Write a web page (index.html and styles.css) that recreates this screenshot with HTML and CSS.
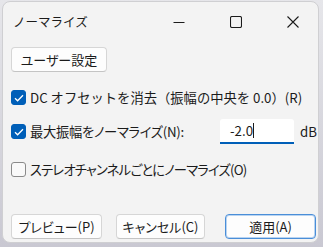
FILE: index.html
```html
<!DOCTYPE html>
<html lang="ja">
<head>
<meta charset="utf-8">
<link rel="stylesheet" href="styles.css">
</head>
<body>
<div class="win">
  <div class="titlebar">
    <span class="title">ノーマライズ</span>
    <div class="controls">
      <span class="ctl"><svg width="12" height="12" viewBox="0 0 12 12"><path d="M0.5 6.5h11" stroke="#1b1b1b" stroke-width="1.1"/></svg></span>
      <span class="ctl"><svg width="12" height="12" viewBox="0 0 12 12"><rect x="0.5" y="0.5" width="11" height="11" rx="1.5" fill="none" stroke="#1b1b1b" stroke-width="1.1"/></svg></span>
      <span class="ctl"><svg width="12" height="12" viewBox="0 0 12 12"><path d="M0.5 0.5l11 11M11.5 0.5l-11 11" stroke="#1b1b1b" stroke-width="1.1"/></svg></span>
    </div>
  </div>
  <div class="body">
    <button class="btn user">ユーザー設定</button>
    <label class="row r1"><span class="cb on"><svg width="10" height="8" viewBox="0 0 10 8"><path d="M1 4.2l2.6 2.6L9 1.2" fill="none" stroke="#fff" stroke-width="1.3"/></svg></span><span class="lbl">DC オフセットを消去（振幅の中央を 0.0）(R)</span></label>
    <div class="row r2"><span class="cb on"><svg width="10" height="8" viewBox="0 0 10 8"><path d="M1 4.2l2.6 2.6L9 1.2" fill="none" stroke="#fff" stroke-width="1.3"/></svg></span><span class="lbl lbl2">最大振幅をノーマライズ(N):</span><span class="input">-2.0<span class="caret"></span></span><span class="db">dB</span></div>
    <label class="row r3"><span class="cb"></span><span class="lbl lbl3">ステレオチャンネルごとにノーマライズ(O)</span></label>
    <div class="buttons">
      <button class="btn b1">プレビュー(P)</button>
      <button class="btn b2">キャンセル(C)</button>
      <button class="btn b3 def">適用(A)</button>
    </div>
  </div>
</div>
</body>
</html>
```
FILE: styles.css
```css
html, body { margin: 0; padding: 0; }
body {
  width: 323px; height: 247px; overflow: hidden;
  background: linear-gradient(180deg, #e6e6ea 0%, #c9c8d2 100%);
  font-family: "Noto Sans CJK JP", "Noto Sans", sans-serif;
  color: #1b1b1b;
}
.win {
  box-sizing: border-box;
  margin: 1px 0 0 2px;
  width: 317px; height: 242px;
  background: #f3f3f3;
  border: 1px solid #cfcfd2;
  border-radius: 8px;
  overflow: hidden;
}
.titlebar { height: 39px; display: flex; align-items: center; }
.title { font-size: 12.5px; margin-left: 10px; margin-top: -1px; }
.controls { margin-left: auto; display: flex; gap: 27px; margin-right: 10px; }
.ctl { width: 30px; height: 14px; display: flex; align-items: center; justify-content: center; }
.body { padding-left: 8px; }
.btn {
  box-sizing: border-box;
  font-family: inherit; font-size: 13px; color: #1b1b1b;
  font-feature-settings: "palt" 1;
  background: #fdfdfd;
  border: 1px solid #d6d6d6; border-bottom-color: #c4c4c4;
  border-radius: 4px;
  padding: 0; line-height: 1;
  display: flex; align-items: center; justify-content: center;
}
.user { width: 96px; height: 25px; margin-top: 6px; }
.row { display: flex; align-items: center; font-size: 13.3px; height: 25px; }
.r1 { margin-top: 13px; }
.r2 { margin-top: 9px; }
.r3 { margin-top: 13px; }
.cb {
  box-sizing: border-box;
  width: 15px; height: 15px; border-radius: 3px;
  border: 1px solid #8a8a8a; background: #f9f9f9;
  display: flex; align-items: center; justify-content: center;
  flex: none;
}
.cb.on { background: #005fb8; border-color: #005fb8; }
.lbl { margin-left: 4px; white-space: nowrap; }
.lbl2 { font-feature-settings: "palt" 1; letter-spacing: -0.3px; width: 160px; flex: none; }
.lbl3 { font-feature-settings: "palt" 1; letter-spacing: -0.8px; }
.input {
  box-sizing: border-box;
  margin-left: 30px;
  width: 74px; height: 25px; flex: none;
  background: #fff; border-radius: 3px 3px 0 0;
  border-bottom: 2px solid #005fb8;
  padding: 0 0 0 10px;
  display: flex; align-items: center; font-size: 13.3px;
}
.caret { width: 1px; height: 15px; background: #1b1b1b; margin-left: 0; }
.db { margin-left: 6px; white-space: nowrap; }
.buttons { display: flex; margin-top: 32px; }
.b1 { width: 91px; height: 25px; }
.b2 { width: 89px; height: 25px; margin-left: 14px; }
.b3 { width: 91px; height: 25px; margin-left: 20px; }
.def { border: 1px solid #4a8ed8; box-shadow: inset 0 0 0 1px #b9d4f1; }
```
